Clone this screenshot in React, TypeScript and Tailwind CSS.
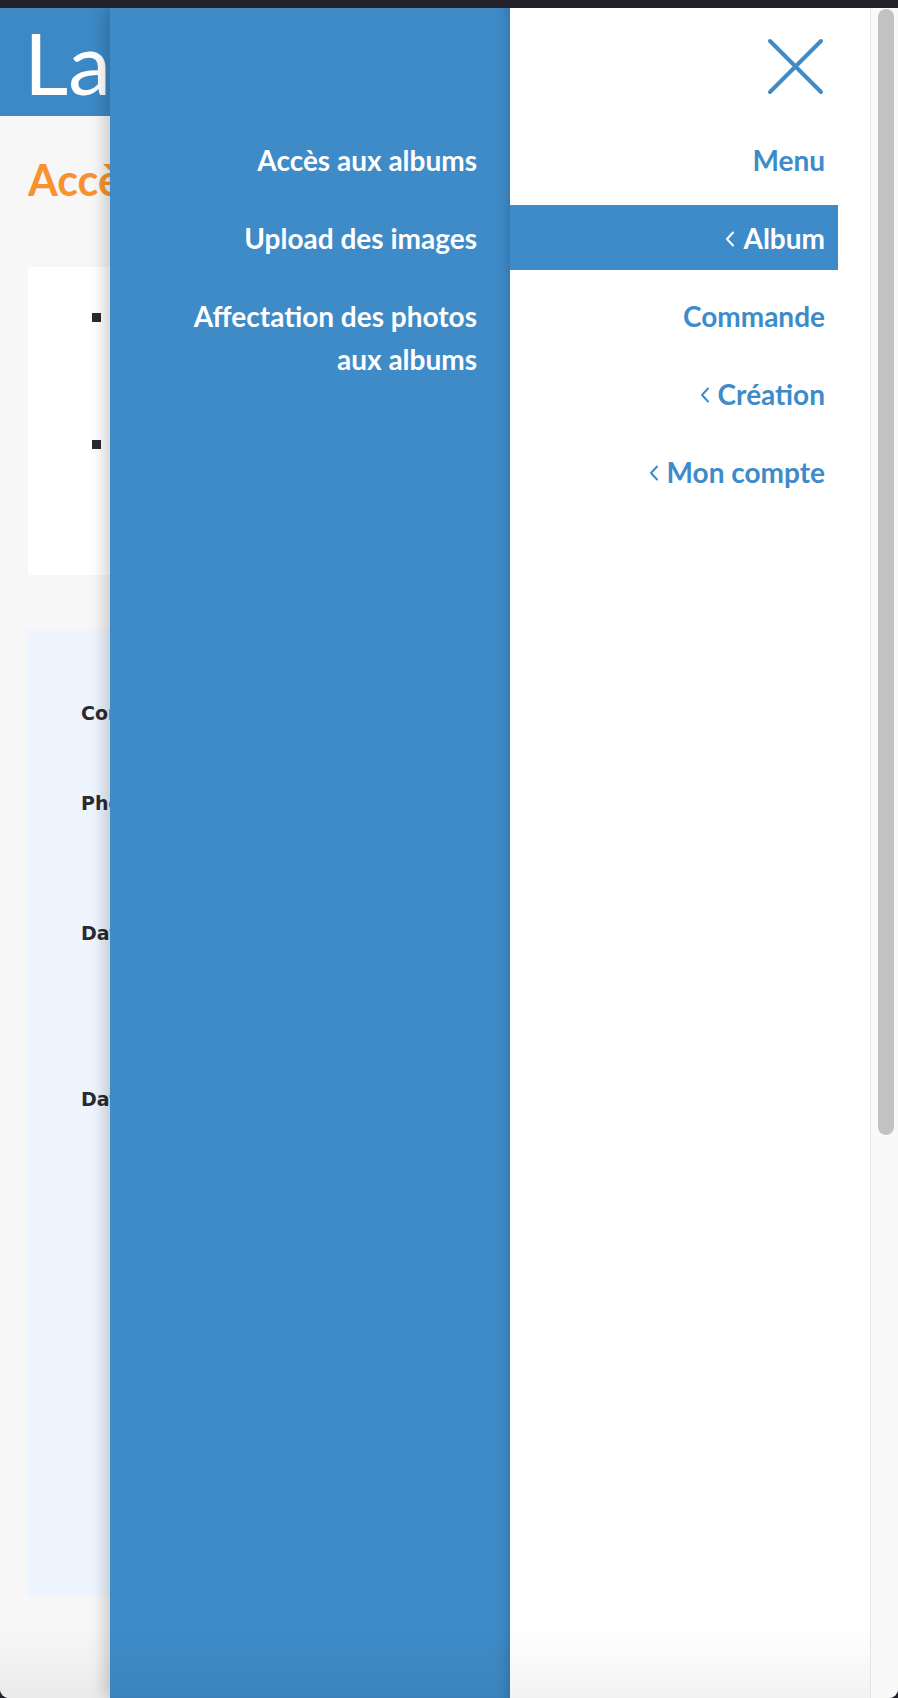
const subItems = ['Accès aux albums', 'Upload des images', 'Affectation des photos aux albums'];

const mainItems = [
  { label: 'Menu', chevron: false, active: false },
  { label: 'Album', chevron: true, active: true },
  { label: 'Commande', chevron: false, active: false },
  { label: 'Création', chevron: true, active: false },
  { label: 'Mon compte', chevron: true, active: false },
];

const Chevron = () => (
  <svg width="10" height="16" viewBox="0 0 10 16" fill="none" className="mr-[8px] mt-[2px]">
    <path d="M8 1.5 2 8l6 6.5" stroke="currentColor" strokeWidth="2" strokeLinecap="round" strokeLinejoin="round" />
  </svg>
);

const CloseIcon = () => (
  <svg width="57" height="57" viewBox="0 0 57 57" fill="none" className="text-[#3d8bc9]">
    <path d="M3 3l51 51M54 3 3 54" stroke="currentColor" strokeWidth="4" strokeLinecap="round" />
  </svg>
);

const App = () => {
  return (
    <div className="w-[898px] h-[1698px] bg-[#24232b] flex flex-col">
      <div className="h-[8px] shrink-0" />

      <div className="flex-1 flex rounded-b-[9px] overflow-hidden bg-[#f8f8f8]">
        <div className="relative flex-1 overflow-hidden">
          {/* page behind the menu */}
          <div className="h-full bg-[#f7f7f8] font-['Lato',sans-serif]">
            <div className="h-[108px] bg-[#3c89c6] pl-[24px] text-white text-[86px] leading-[108px] whitespace-nowrap overflow-hidden">
              La
            </div>

            <h1 className="mt-[38px] ml-[28px] w-[82px] overflow-hidden text-[43px] leading-[52px] font-bold text-[#f7922f] whitespace-nowrap">
              Accès
            </h1>

            <div className="mt-[61px] ml-[28px] mr-[28px] h-[308px] bg-white pl-[64px] pt-[46px]">
              <div className="flex flex-col gap-[118px]">
                <div className="w-[9px] h-[9px] bg-[#2a2a34]" />
                <div className="w-[9px] h-[9px] bg-[#2a2a34]" />
              </div>
            </div>

            <div className="mt-[54px] ml-[28px] mr-[28px] h-[967px] bg-[#eef5fe] pl-[53px] pt-[72px] font-['DejaVu_Sans',sans-serif] text-[19px] font-bold text-[#2a2a33]">
              <div className="leading-[24px]">Commande</div>
              <div className="mt-[66px] leading-[24px]">Photos</div>
              <div className="mt-[106px] leading-[24px]">Date de création</div>
              <div className="mt-[142px] leading-[24px]">Date d'expiration</div>
            </div>
          </div>

          {/* slide-in menu */}
          <div className="absolute top-0 bottom-0 left-[110px] right-0 flex shadow-[-6px_0_14px_rgba(0,0,0,0.18)] font-['Lato',sans-serif]">
            <nav className="w-[400px] bg-[#3e8bc8] shadow-[inset_-12px_0_12px_-8px_rgba(0,0,0,0.14)] pt-[131px] pr-[33px] pl-[40px] flex flex-col items-end gap-[35px]">
              {subItems.map((item) => (
                <a key={item} className="text-right text-white font-bold text-[28px] leading-[43px] max-w-[300px]">
                  {item}
                </a>
              ))}
            </nav>

            <div className="flex-1 bg-white pt-[30px]">
              <div className="flex justify-end pr-[46px]">
                <CloseIcon />
              </div>
              <ul className="mt-[32px] mr-[32px] flex flex-col gap-[13px]">
                {mainItems.map((item) => (
                  <li
                    key={item.label}
                    className={`h-[65px] flex items-center justify-end pr-[13px] font-bold text-[28px] ${
                      item.active ? 'bg-[#3d8bc9] text-white' : 'text-[#3d8bc9]'
                    }`}
                  >
                    {item.chevron && <Chevron />}
                    {item.label}
                  </li>
                ))}
              </ul>
            </div>
          </div>

          <div className="pointer-events-none absolute left-0 right-0 bottom-0 h-[70px] bg-gradient-to-b from-transparent to-black/5" />
        </div>

        {/* scrollbar */}
        <div className="w-[28px] shrink-0 bg-[#f9f9f9] border-l border-[#e4e4e4] pt-[1px] pl-[7px]">
          <div className="w-[16px] h-[1126px] rounded-full bg-[#c2c2c2]" />
        </div>
      </div>
    </div>
  );
};

export default App;
